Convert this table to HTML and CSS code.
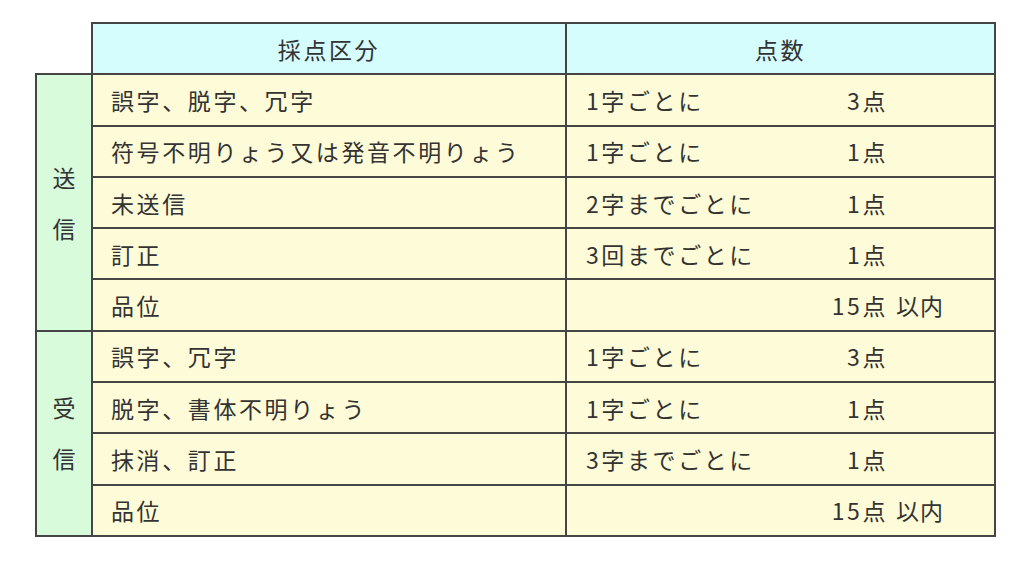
FILE: index.html
```html
<!DOCTYPE html>
<html lang="ja">
<head>
<meta charset="utf-8">
<link rel="stylesheet" href="styles.css">
</head>
<body>
<table class="score">
  <tr class="head">
    <td class="blank"></td>
    <td class="h">採点区分</td>
    <td class="h">点数</td>
  </tr>
  <tr>
    <td class="grp" rowspan="5"><span>送</span><span>信</span></td>
    <td class="cat">誤字、脱字、冗字</td>
    <td class="pt"><div class="pts"><span class="desc">1字ごとに</span><span class="num">3点</span></div></td>
  </tr>
  <tr>
    <td class="cat">符号不明りょう又は発音不明りょう</td>
    <td class="pt"><div class="pts"><span class="desc">1字ごとに</span><span class="num">1点</span></div></td>
  </tr>
  <tr>
    <td class="cat">未送信</td>
    <td class="pt"><div class="pts"><span class="desc">2字までごとに</span><span class="num">1点</span></div></td>
  </tr>
  <tr>
    <td class="cat">訂正</td>
    <td class="pt"><div class="pts"><span class="desc">3回までごとに</span><span class="num">1点</span></div></td>
  </tr>
  <tr>
    <td class="cat">品位</td>
    <td class="pt"><div class="pts"><span class="desc"></span><span class="num">15点</span><span class="suf">以内</span></div></td>
  </tr>
  <tr>
    <td class="grp" rowspan="4"><span>受</span><span>信</span></td>
    <td class="cat">誤字、冗字</td>
    <td class="pt"><div class="pts"><span class="desc">1字ごとに</span><span class="num">3点</span></div></td>
  </tr>
  <tr>
    <td class="cat">脱字、書体不明りょう</td>
    <td class="pt"><div class="pts"><span class="desc">1字ごとに</span><span class="num">1点</span></div></td>
  </tr>
  <tr>
    <td class="cat">抹消、訂正</td>
    <td class="pt"><div class="pts"><span class="desc">3字までごとに</span><span class="num">1点</span></div></td>
  </tr>
  <tr>
    <td class="cat">品位</td>
    <td class="pt"><div class="pts"><span class="desc"></span><span class="num">15点</span><span class="suf">以内</span></div></td>
  </tr>
</table>
</body>
</html>
```

FILE: styles.css
```css
html, body {
  margin: 0;
  padding: 0;
  background: #ffffff;
}

body {
  font-family: "Noto Sans CJK JP", "Noto Sans", sans-serif;
  color: #333333;
}

.score {
  border-collapse: collapse;
  margin: 22px 0 0 35px;
  font-size: 23px;
  letter-spacing: 2.6px;
}

.score td {
  border: 2px solid #454545;
  padding: 0;
  height: 49.3px;
  line-height: 26px;
}

.score td.blank {
  border: none;
  background: #ffffff;
  width: 54px;
}

.head td.h {
  background: #d6fdfe;
  text-align: center;
}

.head td.h:nth-child(2) {
  width: 472px;
}

.grp {
  background: #d8fbdc;
  text-align: center;
  vertical-align: middle;
  width: 54px;
}

.grp span {
  display: block;
  line-height: 51px;
  letter-spacing: 0;
}

.cat {
  background: #fefcd8;
  padding-left: 18px !important;
}

.pt {
  background: #fefcd8;
  width: 427px;
}

.pts {
  display: flex;
  align-items: center;
  padding-left: 19px;
}

.desc {
  flex: 0 0 220px;
}

.num {
  flex: 0 0 82px;
  text-align: right;
}

.suf {
  margin-left: 8px;
  letter-spacing: 1px;
}
```
